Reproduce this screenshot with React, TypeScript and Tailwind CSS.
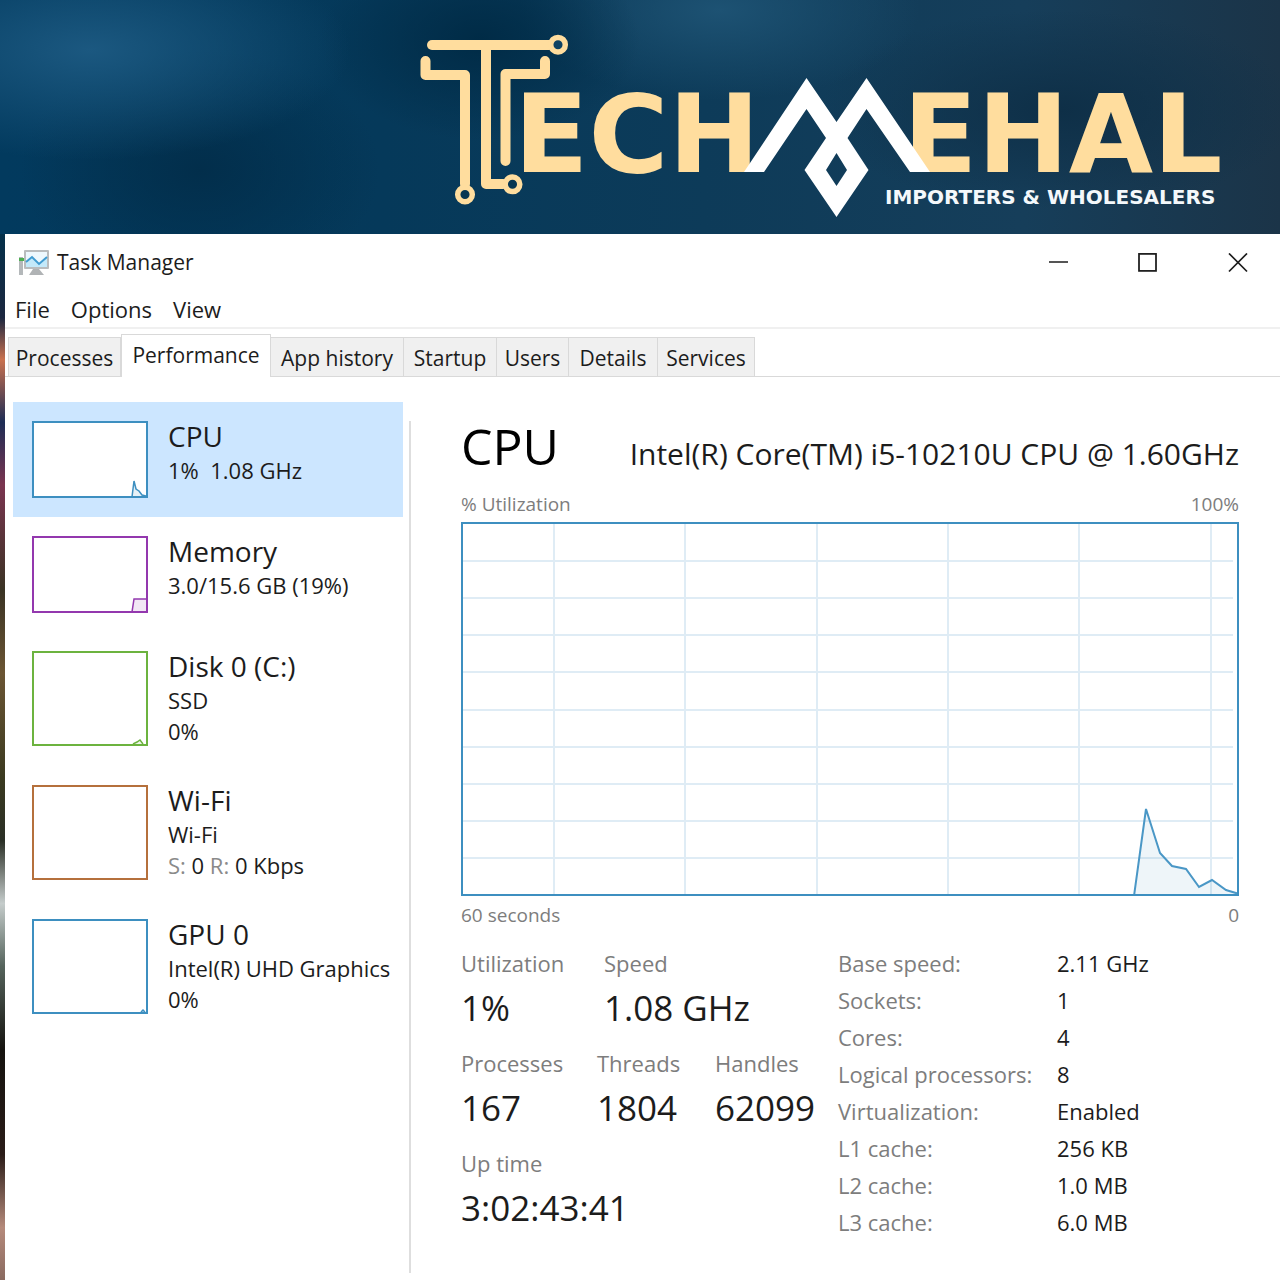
import { useState } from 'react';

type Resource = {
  name: string;
  lines: React.ReactNode[];
  border: string;
  color: string;
  tall?: boolean;
  graph?: string;
};

const tabs = ['Processes', 'Performance', 'App history', 'Startup', 'Users', 'Details', 'Services'];

// graph paths use the thumbnail's own pixel space (112 x 73, or 112 x 91 when tall)
const resources: Resource[] = [
  {
    name: 'CPU',
    lines: [<>1%&nbsp; 1.08 GHz</>],
    border: 'border-[#3d8fc0]',
    color: '#3d8fc0',
    graph: 'M98 74 L100 58 L102 66 L105 68 L108 72 L112 73',
  },
  {
    name: 'Memory',
    lines: ['3.0/15.6 GB (19%)'],
    border: 'border-[#9338ae]',
    color: '#9338ae',
    graph: 'M98 74 L100 61 H113 V74',
  },
  {
    name: 'Disk 0 (C:)',
    lines: ['SSD', '0%'],
    border: 'border-[#6cb33f]',
    color: '#6cb33f',
    tall: true,
    graph: 'M99 91 L103 89 L106 87 L109 91',
  },
  {
    name: 'Wi-Fi',
    lines: [
      'Wi-Fi',
      <>
        <span className="text-[#8a8a8a]">S:</span> 0 <span className="text-[#8a8a8a]">R:</span> 0 Kbps
      </>,
    ],
    border: 'border-[#b5703c]',
    color: '#b5703c',
    tall: true,
  },
  {
    name: 'GPU 0',
    lines: ['Intel(R) UHD Graphics', '0%'],
    border: 'border-[#3d8fc0]',
    color: '#3d8fc0',
    tall: true,
    graph: 'M107 91 L109 89 L111 91',
  },
];

const specs = [
  ['Base speed:', '2.11 GHz'],
  ['Sockets:', '1'],
  ['Cores:', '4'],
  ['Logical processors:', '8'],
  ['Virtualization:', 'Enabled'],
  ['L1 cache:', '256 KB'],
  ['L2 cache:', '1.0 MB'],
  ['L3 cache:', '6.0 MB'],
];

function Logo() {
  return (
    <svg viewBox="418 30 804 190" className="h-[190px] w-[804px]" role="img" aria-label="Techmehal">
      <g fill="none" stroke="#ffdd9e" strokeWidth="10" strokeLinejoin="round" strokeLinecap="round">
        <path d="M432 45 H549" />
        <path d="M425.5 61 V75 H465 V184" />
        <path d="M486 45 V184 H503" />
        <path d="M545 61 V74 H505.5 V161" />
        <g strokeWidth="5.5">
          <circle cx="558" cy="44.7" r="7.3" fill="#0f4263" />
          <circle cx="465" cy="194.5" r="7.3" fill="#083752" />
          <circle cx="512.5" cy="184.3" r="7.3" fill="#083752" />
        </g>
      </g>
      <g fill="#ffdd9e" fontFamily="DejaVu Sans" fontWeight="700" fontSize="109">
        <text x="514" y="172">ECH</text>
        <text x="903" y="172">EHAL</text>
      </g>
      <path
        fill="#ffffff"
        fillRule="evenodd"
        d="M744 172 L806.5 78 L836.5 122 L866.5 78 L930 172 H910 L866.5 109 L847.5 138 L868.5 170 L836.5 217 L804.5 170 L826 138 L806.5 109 L764 172 Z M836.5 153 L847 170 L836.5 186 L826 170 Z"
      />
      <text x="885" y="204" fill="#f4f8fb" fontFamily="DejaVu Sans" fontWeight="700" fontSize="20">
        IMPORTERS &amp; WHOLESALERS
      </text>
    </svg>
  );
}

function AppIcon() {
  return (
    <svg viewBox="0 0 32 28" className="h-7 w-8">
      <rect x="1" y="8" width="4" height="18" fill="#b4b8ba" />
      <rect x="1" y="9" width="5" height="3" fill="#4caf50" />
      <path d="M15 20 h6 l5 6 H11 Z" fill="#b0b3b5" />
      <rect x="6" y="1" width="25" height="19" rx="1" fill="#b9bcbe" />
      <rect x="8" y="3" width="21" height="15" fill="#edf8fe" />
      <path d="M8 13 L14 8 L21 15 L29 8 V18 H8 Z" fill="#c3e9fa" />
      <path d="M8 13 L14 8 L21 15 L29 8" fill="none" stroke="#3f9bd1" strokeWidth="2" />
    </svg>
  );
}

function Thumbnail({ r }: { r: Resource }) {
  return (
    <span className={`block w-[116px] shrink-0 border-2 bg-white ${r.border} ${r.tall ? 'h-[95px]' : 'h-[77px]'}`}>
      <svg viewBox={r.tall ? '0 0 112 91' : '0 0 112 73'} className="block h-full w-full">
        {r.graph && <path d={r.graph} fill={r.color} fillOpacity="0.12" stroke={r.color} strokeWidth="1.5" />}
      </svg>
    </span>
  );
}

function UtilizationChart() {
  const points = '671,372 683,285 697,329 709,342 723,345 736,363 749,356 763,366 776,370';
  return (
    <div className="h-[374px] border-2 border-[#3d8fc0]">
      <svg viewBox="0 0 774 370" preserveAspectRatio="none" className="block h-full w-full">
        <g stroke="#dfecf5" strokeWidth="2">
          {[91, 222, 354, 485, 616, 748].map((x) => (
            <path key={x} d={`M${x} 0 V370`} />
          ))}
          {[37, 74, 111, 148, 186, 223, 260, 297, 334].map((y) => (
            <path key={y} d={`M0 ${y} H770`} />
          ))}
        </g>
        <polygon points={`${points} 776,372`} fill="#3d8fc0" fillOpacity="0.09" />
        <polyline points={points} fill="none" stroke="#4a97c6" strokeWidth="2" />
      </svg>
    </div>
  );
}

function Stat({ label, value, className = '' }: { label: string; value: string; className?: string }) {
  return (
    <div className={className}>
      <dt className="text-[22px] leading-[37px] text-[#7d7d7d]">{label}</dt>
      <dd className="text-[35px] leading-[51px]">{value}</dd>
    </div>
  );
}

export default function App() {
  const [activeTab, setActiveTab] = useState('Performance');
  const [selected, setSelected] = useState('CPU');

  return (
    <div className="flex min-h-screen flex-col bg-[#06324d] font-['Open_Sans',sans-serif] text-[#1c1c1c]">
      <header className="flex h-[234px] justify-end bg-[radial-gradient(ellipse_260px_110px_at_90px_50px,#1b5880_0%,transparent_100%),radial-gradient(ellipse_160px_100px_at_480px_40px,#002b46_0%,transparent_100%),radial-gradient(ellipse_200px_90px_at_720px_10px,#1d5273_0%,transparent_100%),radial-gradient(ellipse_180px_120px_at_200px_170px,#022e4b_0%,transparent_100%),radial-gradient(ellipse_240px_100px_at_1060px_110px,#0e2f47_0%,transparent_100%),linear-gradient(90deg,#023a5e_0%,#05395a_30%,#0d3b59_55%,#163e5a_80%,#1b3448_100%)] pt-[30px] pr-[58px]">
        <Logo />
      </header>

      <div className="flex grow bg-[linear-gradient(180deg,#04304a_0%,#1c2740_8%,#c9714f_12%,#1d2c55_18%,#7a3550_24%,#3a3324_34%,#6b5533_42%,#3b3a20_52%,#2a2f26_58%,#c5cccb_64%,#55645c_70%,#15130f_78%,#2a1c18_88%,#b58a7b_95%,#8a6a60_100%)] pl-[5px]">
        <main className="flex grow flex-col bg-white">
          {/* Title bar */}
          <div className="flex h-[57px] items-center justify-between pr-3 pl-[13px]">
            <div className="flex items-center gap-[7px]">
              <AppIcon />
              <h1 className="text-[21px]">Task Manager</h1>
            </div>
            <div className="flex gap-[30px]">
              <button aria-label="Minimize" className="flex h-10 w-[60px] items-center justify-center">
                <svg viewBox="0 0 20 20" className="h-5 w-5" fill="none" stroke="#1c1c1c" strokeWidth="1.5">
                  <path d="M1 9 H20" />
                </svg>
              </button>
              <button aria-label="Maximize" className="flex h-10 w-[60px] items-center justify-center">
                <svg viewBox="0 0 20 20" className="h-5 w-5" fill="none" stroke="#1c1c1c" strokeWidth="1.75">
                  <rect x="1" y="0.9" width="17" height="17" />
                </svg>
              </button>
              <button aria-label="Close" className="flex h-10 w-[60px] items-center justify-center">
                <svg viewBox="0 0 20 20" className="h-5 w-5" fill="none" stroke="#1c1c1c" strokeWidth="1.75">
                  <path d="M1 0.5 L19 18.5 M19 0.5 L1 18.5" />
                </svg>
              </button>
            </div>
          </div>

          <nav className="flex h-[38px] items-center gap-[21px] border-b-2 border-[#f0f0f0] pl-[10px] text-[22px]">
            <button>File</button>
            <button>Options</button>
            <button>View</button>
          </nav>

          {/* Tabs */}
          <div className="flex h-12 items-end border-b border-[#d9d9d9] pl-[3px]">
            <div
              role="tablist"
              className="grid grid-cols-[113px_150px_133px_93px_72px_89px_97px] items-end text-[21px]"
            >
              {tabs.map((tab) => (
                <button
                  key={tab}
                  role="tab"
                  aria-selected={tab === activeTab}
                  onClick={() => setActiveTab(tab)}
                  className={
                    tab === activeTab
                      ? '-mb-px h-[43px] border border-b-0 border-[#d9d9d9] bg-white'
                      : 'h-[39px] border-t border-r border-[#d9d9d9] bg-[#f0f0f0] pt-1 first:border-l'
                  }
                >
                  {tab}
                </button>
              ))}
            </div>
          </div>

          <div className="flex grow">
            <aside className="w-[398px] shrink-0 pt-[25px] pl-2">
              {resources.map((r) => (
                <button
                  key={r.name}
                  onClick={() => setSelected(r.name)}
                  className={`flex w-full items-start gap-5 pt-[19px] pl-[19px] text-left ${
                    r.tall ? 'h-[134px]' : 'h-[115px]'
                  } ${r.name === selected ? 'bg-[#cce6ff]' : ''}`}
                >
                  <Thumbnail r={r} />
                  <span className="-mt-1 block">
                    <span className="block text-[28px] leading-[38px]">{r.name}</span>
                    {r.lines.map((line, i) => (
                      <span key={i} className="block text-[22px] leading-[31px] whitespace-nowrap">
                        {line}
                      </span>
                    ))}
                  </span>
                </button>
              ))}
            </aside>

            <div className="mt-11 mb-[7px] ml-[6px] w-[2px] bg-[#dedede]" />

            <section className="grow pt-[34px] pr-[41px] pl-[50px]">
              <div className="flex items-baseline justify-between">
                <h2 className="text-[50px] leading-[70px] text-black">CPU</h2>
                <span className="text-[30px]">Intel(R) Core(TM) i5-10210U CPU @ 1.60GHz</span>
              </div>
              <div className="flex justify-between pt-2 pb-[2px] text-[19px] leading-[31px] text-[#7d7d7d]">
                <span>% Utilization</span>
                <span>100%</span>
              </div>
              <UtilizationChart />
              <div className="flex justify-between pt-1 text-[19px] leading-[31px] text-[#7d7d7d]">
                <span>60 seconds</span>
                <span>0</span>
              </div>

              <div className="flex pt-[14px]">
                <dl className="flex w-[377px] flex-col gap-3">
                  <div className="flex">
                    <Stat label="Utilization" value="1%" className="w-[143px]" />
                    <Stat label="Speed" value="1.08 GHz" />
                  </div>
                  <div className="flex">
                    <Stat label="Processes" value="167" className="w-[136px]" />
                    <Stat label="Threads" value="1804" className="w-[118px]" />
                    <Stat label="Handles" value="62099" />
                  </div>
                  <Stat label="Up time" value="3:02:43:41" />
                </dl>
                <table className="text-left text-[22px] leading-[37px]">
                  <tbody>
                    {specs.map(([label, value]) => (
                      <tr key={label}>
                        <th scope="row" className="w-[219px] p-0 font-normal text-[#7d7d7d]">
                          {label}
                        </th>
                        <td className="p-0">{value}</td>
                      </tr>
                    ))}
                  </tbody>
                </table>
              </div>
            </section>
          </div>
        </main>
      </div>
    </div>
  );
}
